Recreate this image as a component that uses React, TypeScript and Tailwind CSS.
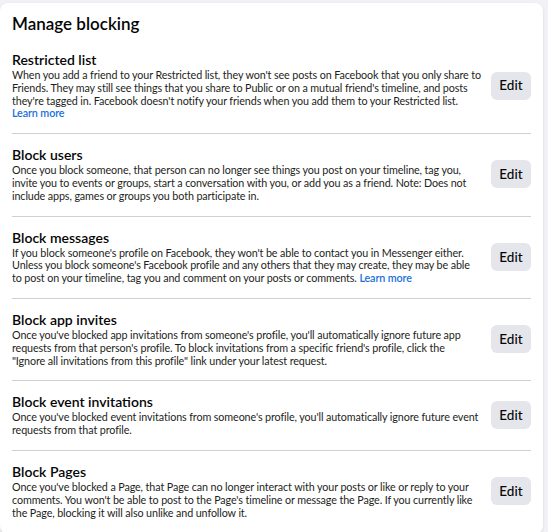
import React from 'react';

type Section = {
  title: string;
  text: string;
  learnMore?: 'inline' | 'block';
};

// \u00a0 keeps a few word pairs together so lines wrap like the original
const sections: Section[] = [
  {
    title: 'Restricted list',
    text: "When you add a friend to your Restricted list, they won't see posts on Facebook that you only share to Friends. They may still see things that you share to Public or on a mutual friend's timeline, and posts they're tagged in. Facebook doesn't notify your friends when you add them to your Restricted list.",
    learnMore: 'block',
  },
  {
    title: 'Block users',
    text: 'Once you block someone, that person can no longer see things you post on your timeline, tag you, invite you to events or groups, start a conversation with you, or add you as a friend. Note: Does not include apps, games or groups you both participate in.',
  },
  {
    title: 'Block messages',
    text: "If you block someone's profile on Facebook, they won't be able to contact you in Messenger either. Unless you block someone's Facebook profile and any others that they may create, they may be able to\u00a0post on your timeline, tag you and comment on your posts or comments.",
    learnMore: 'inline',
  },
  {
    title: 'Block app invites',
    text: 'Once you\'ve blocked app invitations from someone\'s profile, you\'ll automatically ignore future app requests from that person\'s profile. To block invitations from a specific friend\'s profile, click the "Ignore\u00a0all invitations from this profile" link under your latest request.',
  },
  {
    title: 'Block event invitations',
    text: "Once you've blocked event invitations from someone's profile, you'll automatically ignore future event requests from that profile.",
  },
  {
    title: 'Block Pages',
    text: "Once you've blocked a Page, that Page can no longer interact with your posts or like or reply to your comments. You won't be able to post to the Page's timeline or message the Page. If you currently like the Page, blocking it will also unlike and unfollow it.",
  },
];

function Row({ s, last }: { s: Section; last: boolean }) {
  return (
    <div className={`flex items-center gap-[6px] pt-[12px] pb-[13px] ${last ? '' : 'border-b border-[#ced0d4]'}`}>
      <div className="flex-1 min-w-0">
        <h3 className="text-[14px] leading-[18px] font-semibold text-[#050505]">{s.title}</h3>
        <p className="text-[10.75px] leading-[12.8px] tracking-[-0.11px] text-[#1c1e21]">
          {s.text}
          {s.learnMore === 'inline' && (
            <>
              {' '}
              <a href="#" className="text-[#216fdb] font-semibold">Learn more</a>
            </>
          )}
        </p>
        {s.learnMore === 'block' && (
          <a href="#" className="block text-[10.75px] leading-[12.8px] tracking-[-0.11px] text-[#216fdb] font-semibold">Learn more</a>
        )}
      </div>
      <button className="shrink-0 w-[40px] h-[28px] rounded-md bg-[#e4e6eb] text-[13.5px] font-medium text-[#050505]">
        Edit
      </button>
    </div>
  );
}

export default function App() {
  return (
    <div className="min-h-[532px] bg-[#f0f2f5] pt-[3px] pr-[5px]" style={{ fontFamily: 'Lato, "Noto Sans", sans-serif' }}>
      <div className="bg-white rounded-lg shadow-sm pl-[12px] pr-[12px] pt-[11px] pb-[2px]">
        <h2 className="text-[17px] leading-[20px] font-semibold text-[#050505] pb-[5px]">Manage blocking</h2>
        {sections.map((s, i) => (
          <Row key={s.title} s={s} last={i === sections.length - 1} />
        ))}
      </div>
    </div>
  );
}
